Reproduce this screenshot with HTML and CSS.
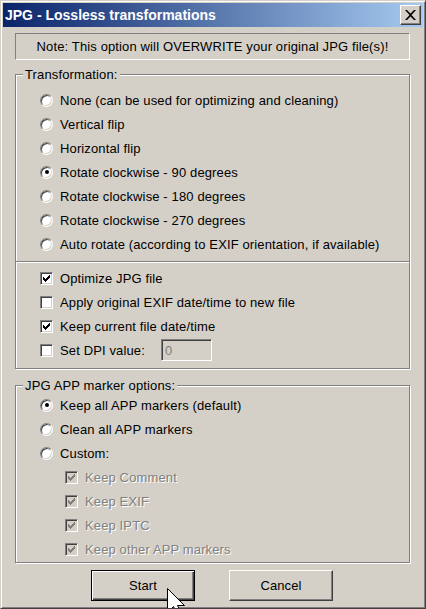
FILE: index.html
```html
<!DOCTYPE html>
<html>
<head>
<meta charset="utf-8">
<title>JPG - Lossless transformations</title>
<link rel="stylesheet" href="styles.css">
</head>
<body>
<div class="window">
  <div class="titlebar">
    <span class="title">JPG - Lossless transformations</span>
    <span class="close"><svg width="11" height="10" viewBox="0 0 11 10"><path d="M0 0H2L5.5 3.5L9 0H11L6.5 5L11 10H9L5.5 6.5L2 10H0L4.5 5Z" fill="#000"/></svg></span>
  </div>
  <div class="client">
    <div class="note">Note: This option will OVERWRITE your original JPG file(s)!</div>

    <div class="group g1">
      <span class="legend">Transformation:</span>
      <div class="row"><span class="radio"></span><span>None (can be used for optimizing and cleaning)</span></div>
      <div class="row"><span class="radio"></span><span>Vertical flip</span></div>
      <div class="row"><span class="radio"></span><span>Horizontal flip</span></div>
      <div class="row"><span class="radio on"></span><span>Rotate clockwise - 90 degrees</span></div>
      <div class="row"><span class="radio"></span><span>Rotate clockwise - 180 degrees</span></div>
      <div class="row"><span class="radio"></span><span>Rotate clockwise - 270 degrees</span></div>
      <div class="row"><span class="radio"></span><span>Auto rotate (according to EXIF orientation, if available)</span></div>
      <div class="sep"></div>
      <div class="row"><span class="check"><svg width="7" height="7" viewBox="0 0 7 7"><path d="M0 2h1v1h1v1h1v-1h1v-1h1v-1h1v-1h1v3h-1v1h-1v1h-1v1h-1v1h-1v-1h-1v-1h-1z" fill="#000"/></svg></span><span>Optimize JPG file</span></div>
      <div class="row"><span class="check"></span><span>Apply original EXIF date/time to new file</span></div>
      <div class="row"><span class="check"><svg width="7" height="7" viewBox="0 0 7 7"><path d="M0 2h1v1h1v1h1v-1h1v-1h1v-1h1v-1h1v3h-1v1h-1v1h-1v1h-1v1h-1v-1h-1v-1h-1z" fill="#000"/></svg></span><span>Keep current file date/time</span></div>
      <div class="row"><span class="check"></span><span class="dpi-label">Set DPI value:</span><span class="field">0</span></div>
    </div>

    <div class="group g2">
      <span class="legend">JPG APP marker options:</span>
      <div class="row"><span class="radio on"></span><span>Keep all APP markers (default)</span></div>
      <div class="row"><span class="radio"></span><span>Clean all APP markers</span></div>
      <div class="row"><span class="radio"></span><span>Custom:</span></div>
      <div class="row sub"><span class="check dis"><svg width="7" height="7" viewBox="0 0 7 7"><path d="M0 2h1v1h1v1h1v-1h1v-1h1v-1h1v-1h1v3h-1v1h-1v1h-1v1h-1v1h-1v-1h-1v-1h-1z" fill="#808080"/></svg></span><span class="dis-text">Keep Comment</span></div>
      <div class="row sub"><span class="check dis"><svg width="7" height="7" viewBox="0 0 7 7"><path d="M0 2h1v1h1v1h1v-1h1v-1h1v-1h1v-1h1v3h-1v1h-1v1h-1v1h-1v1h-1v-1h-1v-1h-1z" fill="#808080"/></svg></span><span class="dis-text">Keep EXIF</span></div>
      <div class="row sub"><span class="check dis"><svg width="7" height="7" viewBox="0 0 7 7"><path d="M0 2h1v1h1v1h1v-1h1v-1h1v-1h1v-1h1v3h-1v1h-1v1h-1v1h-1v1h-1v-1h-1v-1h-1z" fill="#808080"/></svg></span><span class="dis-text">Keep IPTC</span></div>
      <div class="row sub"><span class="check dis"><svg width="7" height="7" viewBox="0 0 7 7"><path d="M0 2h1v1h1v1h1v-1h1v-1h1v-1h1v-1h1v3h-1v1h-1v1h-1v1h-1v1h-1v-1h-1v-1h-1z" fill="#808080"/></svg></span><span class="dis-text">Keep other APP markers</span></div>
    </div>

    <div class="buttons">
      <button class="btn default">Start</button>
      <button class="btn">Cancel</button>
    </div>
  </div>
  <svg class="cursor" width="19" height="28" viewBox="0 0 19 28"><path d="M0.5 0.5V24.5L6.5 18.5L10.5 27.5L14.5 25.5L10.5 17.5H17.5Z" fill="#fff" stroke="#000" stroke-width="1"/></svg>
</div>
</body>
</html>
```

FILE: styles.css
```css
html, body {
  margin: 0;
  padding: 0;
  background: #d4d0c8;
}

body {
  font-family: "Liberation Sans", Arial, sans-serif;
  font-size: 13px;
  color: #000;
}

.window {
  position: relative;
  width: 426px;
  height: 609px;
  box-sizing: border-box;
  border: 1px solid;
  border-color: #d4d0c8 #404040 #404040 #d4d0c8;
  box-shadow: inset 1px 1px #fff, inset -1px -1px #808080;
  padding: 2px;
  background: #d4d0c8;
  overflow: hidden;
}

.titlebar {
  height: 24px;
  display: flex;
  align-items: center;
  padding-left: 2px;
  background: linear-gradient(to right, #0a246a, #a6caf0);
  color: #fff;
  font-weight: bold;
  font-size: 14px;
}

.title {
  flex: 1;
  line-height: 24px;
  white-space: nowrap;
}

.close {
  width: 21px;
  height: 20px;
  box-sizing: border-box;
  margin-right: 2px;
  background: #d4d0c8;
  border: 1px solid;
  border-color: #fff #404040 #404040 #fff;
  box-shadow: inset -1px -1px #808080;
  display: flex;
  align-items: center;
  justify-content: center;
}

.close svg {
  display: block;
}

.client {
  padding: 6px 13px 0 12px;
  letter-spacing: 0.13px;
}

.note {
  width: 395px;
  height: 27px;
  box-sizing: border-box;
  border: 1px solid;
  border-color: #808080 #fff #fff #808080;
  display: flex;
  align-items: center;
  justify-content: center;
  white-space: nowrap;
}

.group {
  position: relative;
  width: 395px;
  box-sizing: border-box;
  border: 1px solid #808080;
  box-shadow: inset 1px 1px #fff, 1px 1px #fff;
}

.g1 {
  margin-top: 14px;
  padding: 13px 0 6px;
}

.g2 {
  margin-top: 16px;
  padding: 7px 0 1px;
}

.legend {
  position: absolute;
  top: -8px;
  left: 7px;
  padding: 0 2px;
  line-height: 15px;
  background: #d4d0c8;
  white-space: nowrap;
}

.sep {
  height: 1px;
  margin: 5px 0 3px;
  background: #808080;
  border-bottom: 1px solid #fff;
}

.row {
  height: 24px;
  display: flex;
  align-items: center;
  gap: 7px;
  padding-left: 24px;
  white-space: nowrap;
}

.row.sub {
  padding-left: 49px;
}

.radio {
  position: relative;
  flex: none;
  width: 13px;
  height: 13px;
  box-sizing: border-box;
  border-radius: 50%;
  background: #fff;
  border: 1px solid;
  border-color: #808080 #fff #fff #808080;
  box-shadow: inset 1px 1px #404040, inset -1px -1px #d4d0c8;
}

.radio.on::after {
  content: "";
  position: absolute;
  left: 3.5px;
  top: 3.5px;
  width: 4px;
  height: 4px;
  border-radius: 50%;
  background: #000;
}

.check {
  flex: none;
  width: 13px;
  height: 13px;
  box-sizing: border-box;
  background: #fff;
  border: 1px solid;
  border-color: #808080 #fff #fff #808080;
  box-shadow: inset 1px 1px #404040, inset -1px -1px #d4d0c8;
  display: flex;
  align-items: center;
  justify-content: center;
}

.check svg {
  display: block;
}

.check.dis {
  background: #d4d0c8;
}

.dis-text {
  color: #808080;
  text-shadow: 1px 1px 0 #fff;
}

.dpi-label {
  width: 94px;
}

.field {
  width: 51px;
  height: 22px;
  box-sizing: border-box;
  border: 1px solid;
  border-color: #808080 #fff #fff #808080;
  box-shadow: inset 1px 1px #404040, inset -1px -1px #d4d0c8;
  background: #d4d0c8;
  color: #808080;
  padding-left: 3px;
  display: flex;
  align-items: center;
}

.buttons {
  display: flex;
  gap: 34px;
  margin-top: 7px;
  padding-left: 76px;
}

.btn {
  width: 104px;
  height: 31px;
  box-sizing: border-box;
  padding: 0;
  font: inherit;
  letter-spacing: inherit;
  color: #000;
  background: #d4d0c8;
  border: 1px solid;
  border-color: #fff #404040 #404040 #fff;
  box-shadow: inset -1px -1px #808080;
}

.btn.default {
  border: 1px solid #000;
  box-shadow: inset 1px 1px #fff, inset -1px -1px #404040, inset -2px -2px #808080;
}

.cursor {
  position: absolute;
  left: 166px;
  top: 587px;
}
```
